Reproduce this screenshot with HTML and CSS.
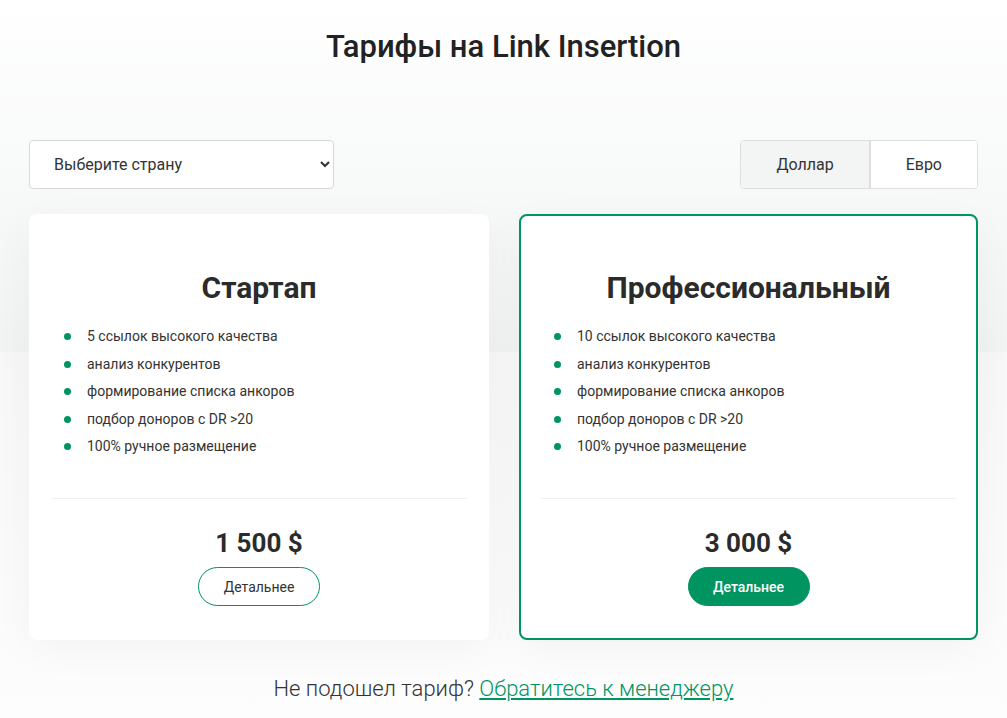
FILE: index.html
```html
<!DOCTYPE html>
<html lang="ru">
<head>
<meta charset="utf-8">
<title>Тарифы на Link Insertion</title>
<link rel="stylesheet" href="styles.css">
</head>
<body>
<main class="page">
  <h1 class="page-title">Тарифы на Link Insertion</h1>
  <div class="controls">
    <select class="country-select">
      <option>Выберите страну</option>
      <option>Россия</option>
      <option>Украина</option>
    </select>
    <div class="currency">
      <button class="currency-btn active">Доллар</button>
      <button class="currency-btn">Евро</button>
    </div>
  </div>
  <div class="plans">
    <section class="plan">
      <h2 class="plan-title">Стартап</h2>
      <ul class="plan-list">
        <li>5 ссылок высокого качества</li>
        <li>анализ конкурентов</li>
        <li>формирование списка анкоров</li>
        <li>подбор доноров с DR &gt;20</li>
        <li>100% ручное размещение</li>
      </ul>
      <div class="plan-footer">
        <div class="plan-price">1 500 $</div>
        <a class="plan-btn" href="#">Детальнее</a>
      </div>
    </section>
    <section class="plan plan-featured">
      <h2 class="plan-title">Профессиональный</h2>
      <ul class="plan-list">
        <li>10 ссылок высокого качества</li>
        <li>анализ конкурентов</li>
        <li>формирование списка анкоров</li>
        <li>подбор доноров с DR &gt;20</li>
        <li>100% ручное размещение</li>
      </ul>
      <div class="plan-footer">
        <div class="plan-price">3 000 $</div>
        <a class="plan-btn plan-btn-filled" href="#">Детальнее</a>
      </div>
    </section>
  </div>
  <p class="note">Не подошел тариф? <a href="#" class="note-link">Обратитесь к менеджеру</a></p>
</main>
</body>
</html>
```
FILE: styles.css
```css
* { box-sizing: border-box; }
html, body { margin: 0; padding: 0; }
body {
  font-family: Roboto, "Liberation Sans", Arial, sans-serif;
  color: #333;
  min-height: 718px;
  background: linear-gradient(to bottom, #ffffff 0px, #f1f3f3 352px, #f7f7f7 352px, #fdfdfd 718px);
}
.page {
  width: 949px;
  margin: 0 auto;
  padding-top: 28px;
  padding-bottom: 20px;
}
.page-title {
  margin: 0;
  text-align: center;
  font-size: 31px;
  line-height: 37px;
  font-weight: 500;
  color: #222;
}
.controls {
  margin-top: 75px;
  display: flex;
  justify-content: space-between;
  align-items: center;
  height: 49px;
}
.country-select {
  width: 305px;
  height: 49px;
  padding: 0 6px 0 20px;
  border: 1px solid #d8d8d8;
  border-radius: 4px;
  background-color: #fff;
  font-family: Roboto, "Liberation Sans", Arial, sans-serif;
  font-size: 16px;
  color: #333;
}
.currency {
  display: flex;
  height: 49px;
  border: 1px solid #dedede;
  border-radius: 4px;
  overflow: hidden;
  background: #fff;
}
.currency-btn {
  border: 0;
  padding: 0 35px;
  font-family: Roboto, "Liberation Sans", Arial, sans-serif;
  font-size: 16px;
  color: #333;
  background: #fff;
}
.currency-btn + .currency-btn { border-left: 2px solid #dedede; }
.currency-btn.active { background: #f3f4f4; }
.plans {
  margin-top: 25px;
  display: grid;
  grid-template-columns: 460px 459px;
  justify-content: space-between;
}
.plan {
  background: #fff;
  border: 2px solid #fff;
  border-radius: 8px;
  padding: 54px 20px 31px;
  height: 426px;
  box-shadow: 0 10px 40px rgba(0, 0, 0, 0.04);
}
.plan-featured { border-color: #009460; }
.plan-title {
  margin: 0;
  text-align: center;
  font-size: 30px;
  line-height: 36px;
  font-weight: 700;
  color: #2b2b2b;
}
.plan-list {
  list-style: none;
  margin: 17px 0 0;
  padding: 0;
  height: 175px;
}
.plan-list li {
  position: relative;
  padding-left: 36px;
  font-size: 14px;
  line-height: 27.5px;
  color: #333;
}
.plan-list li::before {
  content: "";
  position: absolute;
  left: 13px;
  top: 10px;
  width: 7px;
  height: 7px;
  border-radius: 50%;
  background: #009460;
}
.plan-footer {
  border-top: 1px solid #f1f1f1;
  padding-top: 29px;
  display: flex;
  flex-direction: column;
  align-items: center;
}
.plan-price {
  font-size: 26px;
  line-height: 31px;
  font-weight: 700;
  color: #2b2b2b;
}
.plan-btn {
  margin-top: 8px;
  width: 122px;
  height: 39px;
  display: flex;
  align-items: center;
  justify-content: center;
  border: 1px solid #009460;
  border-radius: 20px;
  font-size: 14px;
  color: #333;
  text-decoration: none;
  background: #fff;
}
.plan-btn-filled {
  background: #009460;
  color: #fff;
  font-weight: 500;
}
.note {
  margin: 36px 0 0;
  text-align: center;
  font-size: 22px;
  line-height: 26px;
  font-weight: 300;
  color: #333;
}
.note-link {
  color: #009460;
  text-decoration: underline;
}
```
